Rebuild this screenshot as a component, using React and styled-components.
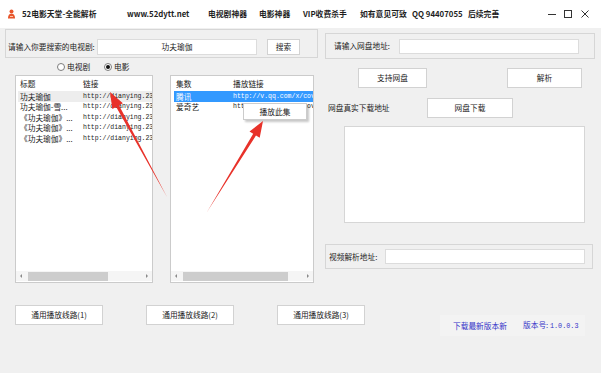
import React from 'react';
import styled, { createGlobalStyle } from 'styled-components';

const Global = createGlobalStyle`
  html, body { margin: 0; padding: 0; background: #f0f0f0; }
  body { font-family: "Noto Sans CJK SC", "Noto Sans", sans-serif; }
`;

const Window = styled.div`
  position: relative;
  width: 601px;
  height: 373px;
  background: #f0f0f0;
  overflow: hidden;
  color: #1c1c1c;
  font-size: 7.7px;
  line-height: 1;
`;

const TitleBar = styled.div`
  height: 28px;
  background: #ffffff;
  display: flex;
  align-items: center;
  padding-left: 7px;
  box-sizing: border-box;
`;

const Logo = styled.svg`
  flex: none;
  margin-right: 6px;
`;

const TitleItem = styled.span`
  flex: none;
  width: ${p => p.$w}px;
  font-weight: 700;
  font-size: 7.8px;
  white-space: nowrap;
  color: #1e1e1e;
`;

const Controls = styled.div`
  display: flex;
  align-items: center;
  gap: 8px;
  flex: none;
`;

const Body = styled.div`
  display: flex;
  padding: 1px 0 0 5px;
`;

const LeftCol = styled.div`
  width: 313px;
  flex: none;
  display: flex;
  flex-direction: column;
`;

const RightCol = styled.div`
  width: 270px;
  flex: none;
  margin-left: 7px;
  display: flex;
  flex-direction: column;
`;

const GroupBox = styled.div`
  box-sizing: border-box;
  border: 1px solid #d6d6d6;
  width: ${p => (p.$w ? `${p.$w}px` : 'auto')};
  height: ${p => p.$h}px;
  margin-top: ${p => p.$mt || 0}px;
  padding: ${p => p.$pt || 0}px 0 0 ${p => p.$pl || 0}px;
  display: flex;
  align-items: center;
`;

const Label = styled.span`
  flex: none;
  width: ${p => p.$w}px;
  white-space: nowrap;
  color: #1c1c1c;
`;

const TextInput = styled.div`
  flex: none;
  box-sizing: border-box;
  width: ${p => p.$w}px;
  height: ${p => p.$h}px;
  background: #ffffff;
  border: 1px solid #dcdcdc;
  display: flex;
  align-items: center;
  justify-content: center;
`;

const Button = styled.div`
  flex: none;
  box-sizing: border-box;
  width: ${p => p.$w}px;
  height: ${p => p.$h || 20}px;
  margin-left: ${p => p.$ml || 0}px;
  background: #ffffff;
  border: 1px solid #d2d2d2;
  display: flex;
  align-items: center;
  justify-content: center;
  white-space: nowrap;
  color: #1c1c1c;
`;

const RadioRow = styled.div`
  height: 17px;
  display: flex;
  align-items: center;
  padding-left: 52px;
  padding-top: 1px;
  box-sizing: border-box;
`;

const RadioItem = styled.label`
  flex: none;
  width: ${p => p.$w}px;
  display: flex;
  align-items: center;
  gap: 2px;
`;

const RadioCircle = styled.span`
  box-sizing: border-box;
  width: 8px;
  height: 8px;
  border-radius: 50%;
  border: 1px solid #7c7c7c;
  background: #ffffff;
  display: flex;
  align-items: center;
  justify-content: center;
  &::after {
    content: '';
    display: ${p => (p.$checked ? 'block' : 'none')};
    width: 4px;
    height: 4px;
    border-radius: 50%;
    background: #111;
  }
`;

const ListsRow = styled.div`
  height: 208px;
  display: flex;
  gap: 17px;
  padding-left: 10px;
`;

const ListBox = styled.div`
  position: relative;
  box-sizing: border-box;
  width: ${p => p.$w}px;
  height: 100%;
  background: #ffffff;
  border: 1px solid #cbcbcb;
  display: flex;
  flex-direction: column;
  overflow: hidden;
`;

const ListHeader = styled.div`
  flex: none;
  height: 15px;
  display: flex;
  align-items: center;
  padding-left: ${p => p.$pl}px;
`;

const Rows = styled.div`
  flex: 1;
  display: flex;
  flex-direction: column;
`;

const Row = styled.div`
  flex: none;
  height: 10.5px;
  display: flex;
  align-items: center;
  margin-left: ${p => p.$ml}px;
  padding-left: 2px;
  background: ${p => (p.$selected ? '#3399ff' : p.$hover ? '#ededed' : 'transparent')};
  color: ${p => (p.$selected ? '#ffffff' : '#1c1c1c')};
`;

const Col = styled.span`
  flex: none;
  width: ${p => p.$w}px;
  white-space: nowrap;
  line-height: 1.45;
`;

const Link = styled.span`
  flex: none;
  white-space: nowrap;
  font-family: "Liberation Mono", "DejaVu Sans Mono", monospace;
  font-size: 6.5px;
  line-height: 1.45;
`;

const ScrollBar = styled.div`
  flex: none;
  height: 10px;
  margin-bottom: 1px;
  background: #f5f5f5;
  display: flex;
  align-items: center;
`;

const ScrollArrow = styled.span`
  flex: none;
  width: 10px;
  height: 10px;
  display: flex;
  align-items: center;
  justify-content: center;
  &::after {
    content: '';
    width: 0;
    height: 0;
    border-top: 2px solid transparent;
    border-bottom: 2px solid transparent;
    ${p => (p.$dir === 'left' ? 'border-right: 2px solid #8a8a8a;' : 'border-left: 2px solid #8a8a8a;')}
  }
`;

const Track = styled.div`
  flex: 1;
  height: 100%;
  display: flex;
  align-items: center;
`;

const Thumb = styled.div`
  margin-left: ${p => p.$ml}px;
  width: ${p => p.$w}px;
  height: 9px;
  background: #cdcdcd;
`;

const ContextMenu = styled.div`
  position: absolute;
  left: 72px;
  top: 27px;
  width: 64px;
  height: 17px;
  box-sizing: border-box;
  background: #ffffff;
  border: 1px solid #cccccc;
  box-shadow: 2px 2px 2px rgba(0, 0, 0, 0.22);
  display: flex;
  align-items: center;
  justify-content: center;
  color: #1c1c1c;
`;

const BottomRow = styled.div`
  margin-top: 22px;
  padding-left: 10px;
  display: flex;
  gap: 43px;
`;

const FlexRow = styled.div`
  height: ${p => p.$h}px;
  margin-top: ${p => p.$mt}px;
  padding-left: ${p => p.$pl || 0}px;
  display: flex;
  align-items: center;
`;

const TextArea = styled.div`
  box-sizing: border-box;
  margin-top: 8px;
  margin-left: 19px;
  width: 241px;
  height: 97px;
  background: #ffffff;
  border: 1px solid #d6d6d6;
`;

const VersionBar = styled.div`
  margin-top: 46px;
  margin-left: 115px;
  width: 145px;
  height: 21px;
  box-sizing: border-box;
  padding-left: 13px;
  background: #f3f3f3;
  display: flex;
  align-items: center;
  color: #3434c8;
`;

const VersionText = styled.span`
  flex: none;
  width: ${p => p.$w}px;
  white-space: nowrap;
`;

const Mono = styled.span`
  font-family: "Liberation Mono", "DejaVu Sans Mono", monospace;
  font-size: 6.8px;
`;

const Overlay = styled.svg`
  position: absolute;
  left: 0;
  top: 0;
  pointer-events: none;
`;

const leftRows = ['功夫瑜伽', '功夫瑜伽-雪...', '《功夫瑜伽》...', '《功夫瑜伽》...', '《功夫瑜伽》...'];

export default function App() {
  return (
    <>
      <Global />
      <Window>
        <TitleBar>
          <Logo width="9" height="10" viewBox="0 0 9 10">
            <circle cx="4.5" cy="2.6" r="2" fill="#e8562c" />
            <path d="M1 9.5 C1 6 2.5 4.8 4.5 4.8 C6.5 4.8 8 6 8 9.5 Z" fill="#e8562c" />
            <path d="M3 7.5 L6 7.5" stroke="#ffd2b8" strokeWidth="0.9" />
          </Logo>
          <TitleItem $w={105}>52电影天堂-全能解析</TitleItem>
          <TitleItem $w={81}>www.52dytt.net</TitleItem>
          <TitleItem $w={51}>电视剧神器</TitleItem>
          <TitleItem $w={44}>电影神器</TitleItem>
          <TitleItem $w={57}>VIP收费杀手</TitleItem>
          <TitleItem $w={52}>如有意见可致</TitleItem>
          <TitleItem $w={56}>QQ 94407055</TitleItem>
          <TitleItem $w={80}>后续完善</TitleItem>
          <Controls>
            <svg width="8" height="8" viewBox="0 0 8 8">
              <path d="M0 4.5 H8" stroke="#333" strokeWidth="1" />
            </svg>
            <svg width="8" height="8" viewBox="0 0 8 8">
              <rect x="0.5" y="0.5" width="7" height="7" fill="none" stroke="#333" strokeWidth="1" />
            </svg>
            <svg width="8" height="8" viewBox="0 0 8 8" style={{ marginLeft: 1 }}>
              <path d="M0.5 0.5 L7.5 7.5 M7.5 0.5 L0.5 7.5" stroke="#333" strokeWidth="1" />
            </svg>
          </Controls>
        </TitleBar>

        <Body>
          <LeftCol>
            <GroupBox $h={29} $pl={2} $pt={7}>
              <Label $w={89}>请输入你要搜索的电视剧:</Label>
              <TextInput $w={160} $h={16}>功夫瑜伽</TextInput>
              <Button $w={33} $h={16} $ml={10}>搜索</Button>
            </GroupBox>

            <RadioRow>
              <RadioItem $w={47}>
                <RadioCircle />
                电视剧
              </RadioItem>
              <RadioItem $w={40}>
                <RadioCircle $checked />
                电影
              </RadioItem>
            </RadioRow>

            <ListsRow>
              <ListBox $w={138}>
                <ListHeader $pl={4}>
                  <Col $w={63}>标题</Col>
                  <Col $w={40}>链接</Col>
                </ListHeader>
                <Rows>
                  {leftRows.map((t, i) => (
                    <Row key={i} $ml={2} $hover={i === 0}>
                      <Col $w={63}>{t}</Col>
                      <Link>http://dianying.23</Link>
                    </Row>
                  ))}
                </Rows>
                <ScrollBar>
                  <ScrollArrow $dir="left" />
                  <Track>
                    <Thumb $ml={2} $w={80} />
                  </Track>
                  <ScrollArrow $dir="right" />
                </ScrollBar>
              </ListBox>

              <ListBox $w={144}>
                <ListHeader $pl={5}>
                  <Col $w={57}>集数</Col>
                  <Col $w={50}>播放链接</Col>
                </ListHeader>
                <Rows>
                  <Row $ml={3} $selected>
                    <Col $w={57}>腾讯</Col>
                    <Link>http://v.qq.com/x/cov</Link>
                  </Row>
                  <Row $ml={3}>
                    <Col $w={57}>爱奇艺</Col>
                    <Link>http://v.qq.com/x/cov</Link>
                  </Row>
                </Rows>
                <ScrollBar>
                  <ScrollArrow $dir="left" />
                  <Track>
                    <Thumb $ml={2} $w={105} />
                  </Track>
                  <ScrollArrow $dir="right" />
                </ScrollBar>
                <ContextMenu>播放此集</ContextMenu>
              </ListBox>
            </ListsRow>

            <BottomRow>
              <Button $w={88}>通用播放线路(1)</Button>
              <Button $w={88}>通用播放线路(2)</Button>
              <Button $w={88}>通用播放线路(3)</Button>
            </BottomRow>
          </LeftCol>

          <RightCol>
            <GroupBox $h={26} $mt={4} $pl={8}>
              <Label $w={65}>请输入网盘地址:</Label>
              <TextInput $w={180} $h={15} />
            </GroupBox>

            <FlexRow $h={20} $mt={9}>
              <Button $w={69} $ml={33}>支持网盘</Button>
              <Button $w={75} $ml={80}>解析</Button>
            </FlexRow>

            <FlexRow $h={20} $mt={10} $pl={3}>
              <Label $w={99}>网盘真实下载地址</Label>
              <Button $w={86}>网盘下载</Button>
            </FlexRow>

            <TextArea />

            <GroupBox $w={268} $h={25} $mt={21} $pl={3}>
              <Label $w={56}>视频解析地址:</Label>
              <TextInput $w={200} $h={15} />
            </GroupBox>

            <VersionBar>
              <VersionText $w={70}>下载最新版本新</VersionText>
              <VersionText $w={60}>
                版本号: <Mono>1.0.0.3</Mono>
              </VersionText>
            </VersionBar>
          </RightCol>
        </Body>

        <Overlay width="601" height="373" viewBox="0 0 601 373">
          <polygon
            points="167,197 119,105.3 122.9,103.2 110,92 112.3,109 116.2,106.9"
            fill="#e8322a"
          />
          <polygon
            points="207,212 256,135.4 259.7,137.7 263,121 249.5,131.5 253.2,133.8"
            fill="#e8322a"
          />
        </Overlay>
      </Window>
    </>
  );
}
